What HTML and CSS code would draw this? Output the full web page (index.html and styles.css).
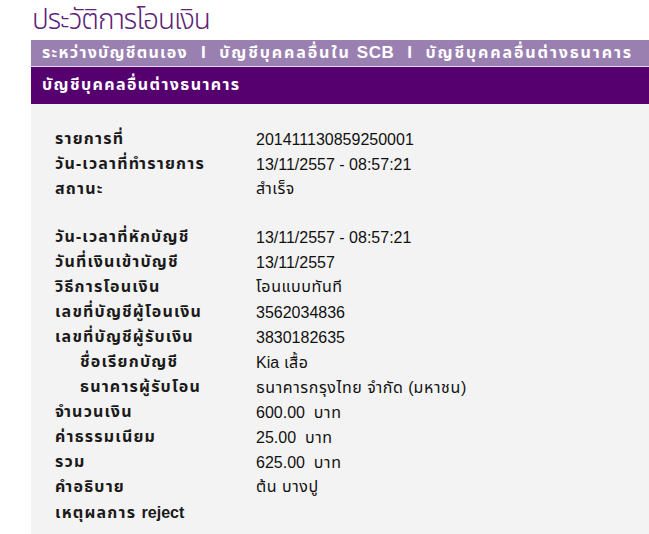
FILE: index.html
```html
<!DOCTYPE html>
<html lang="th">
<head>
<meta charset="utf-8">
<link rel="stylesheet" href="styles.css">
</head>
<body>
<div class="page">
  <h1 class="title">ประวัติการโอนเงิน</h1>
  <div class="tabs">
    <span>ระหว่างบัญชีตนเอง</span><span class="sep en">I</span><span>บัญชีบุคคลอื่นใน <span class="en">SCB</span></span><span class="sep en">I</span><span>บัญชีบุคคลอื่นต่างธนาคาร</span>
  </div>
  <div class="subhead">บัญชีบุคคลอื่นต่างธนาคาร</div>
  <div class="content">
    <div class="group">
      <div class="row"><div class="label">รายการที่</div><div class="value"><span class="en">201411130859250001</span></div></div>
      <div class="row"><div class="label">วัน-เวลาที่ทำรายการ</div><div class="value"><span class="en">13/11/2557 - 08:57:21</span></div></div>
      <div class="row"><div class="label">สถานะ</div><div class="value">สำเร็จ</div></div>
    </div>
    <div class="group">
      <div class="row"><div class="label">วัน-เวลาที่หักบัญชี</div><div class="value"><span class="en">13/11/2557 - 08:57:21</span></div></div>
      <div class="row"><div class="label">วันที่เงินเข้าบัญชี</div><div class="value"><span class="en">13/11/2557</span></div></div>
      <div class="row"><div class="label">วิธีการโอนเงิน</div><div class="value">โอนแบบทันที</div></div>
      <div class="row"><div class="label">เลขที่บัญชีผู้โอนเงิน</div><div class="value"><span class="en">3562034836</span></div></div>
      <div class="row"><div class="label">เลขที่บัญชีผู้รับเงิน</div><div class="value"><span class="en">3830182635</span></div></div>
      <div class="row sub"><div class="label">ชื่อเรียกบัญชี</div><div class="value"><span class="en">Kia</span> เสื้อ</div></div>
      <div class="row sub"><div class="label">ธนาคารผู้รับโอน</div><div class="value">ธนาคารกรุงไทย จำกัด <span class="en">(</span>มหาชน<span class="en">)</span></div></div>
      <div class="row"><div class="label">จำนวนเงิน</div><div class="value"><span class="en">600.00&nbsp; </span>บาท</div></div>
      <div class="row"><div class="label">ค่าธรรมเนียม</div><div class="value"><span class="en">25.00&nbsp; </span>บาท</div></div>
      <div class="row"><div class="label">รวม</div><div class="value"><span class="en">625.00&nbsp; </span>บาท</div></div>
      <div class="row"><div class="label">คำอธิบาย</div><div class="value">ต้น บางปู</div></div>
      <div class="row"><div class="label">เหตุผลการ <span class="en">reject</span></div><div class="value"></div></div>
    </div>
  </div>
</div>
</body>
</html>
```

FILE: styles.css
```css
html, body {
  margin: 0;
  padding: 0;
  background: #ffffff;
}
body {
  font-family: "Noto Sans Thai", "Liberation Sans", "Noto Sans", sans-serif;
  font-size: 16px;
  color: #111;
}
.en {
  font-family: "Liberation Sans", "Noto Sans", sans-serif;
  font-size: 16px;
  letter-spacing: 0;
}
.page {
  padding-left: 31px;
}
.title {
  margin: 0;
  height: 35px;
  padding: 5px 0 0 1px;
  font-family: "Noto Sans Thai", "Noto Sans", sans-serif;
  font-weight: 300;
  font-size: 28px;
  line-height: 32px;
  color: #5c2379;
  letter-spacing: -1px;
  white-space: nowrap;
}
.tabs {
  background: #9a80b0;
  height: 26px;
  line-height: 26px;
  color: #fff;
  font-weight: bold;
  font-size: 16px;
  letter-spacing: 1.3px;
  padding-left: 11px;
  border-bottom: 1px solid #e9d9ef;
  white-space: nowrap;
  overflow: hidden;
}
.tabs span + span + span {
  letter-spacing: 1.9px;
}
.tabs .en {
  font-size: 17px;
  letter-spacing: 0.5px;
}
.sep {
  margin: 0 13px;
}
.subhead {
  background: #560070;
  height: 37px;
  line-height: 37px;
  color: #fff;
  font-weight: bold;
  font-size: 16px;
  letter-spacing: 1.4px;
  padding-left: 11px;
}
.content {
  background: #f3f3f3;
  padding: 23px 0 10px 24px;
  min-height: 400px;
}
.group + .group {
  margin-top: 23px;
}
.row {
  display: flex;
  height: 25px;
  line-height: 25px;
}
.label {
  width: 201px;
  font-weight: bold;
  letter-spacing: 1.2px;
  color: #1a1a1a;
  flex: none;
  white-space: nowrap;
}
.row.sub .label {
  padding-left: 25px;
  width: 176px;
}
.value {
  white-space: nowrap;
  letter-spacing: 0.6px;
}
```
